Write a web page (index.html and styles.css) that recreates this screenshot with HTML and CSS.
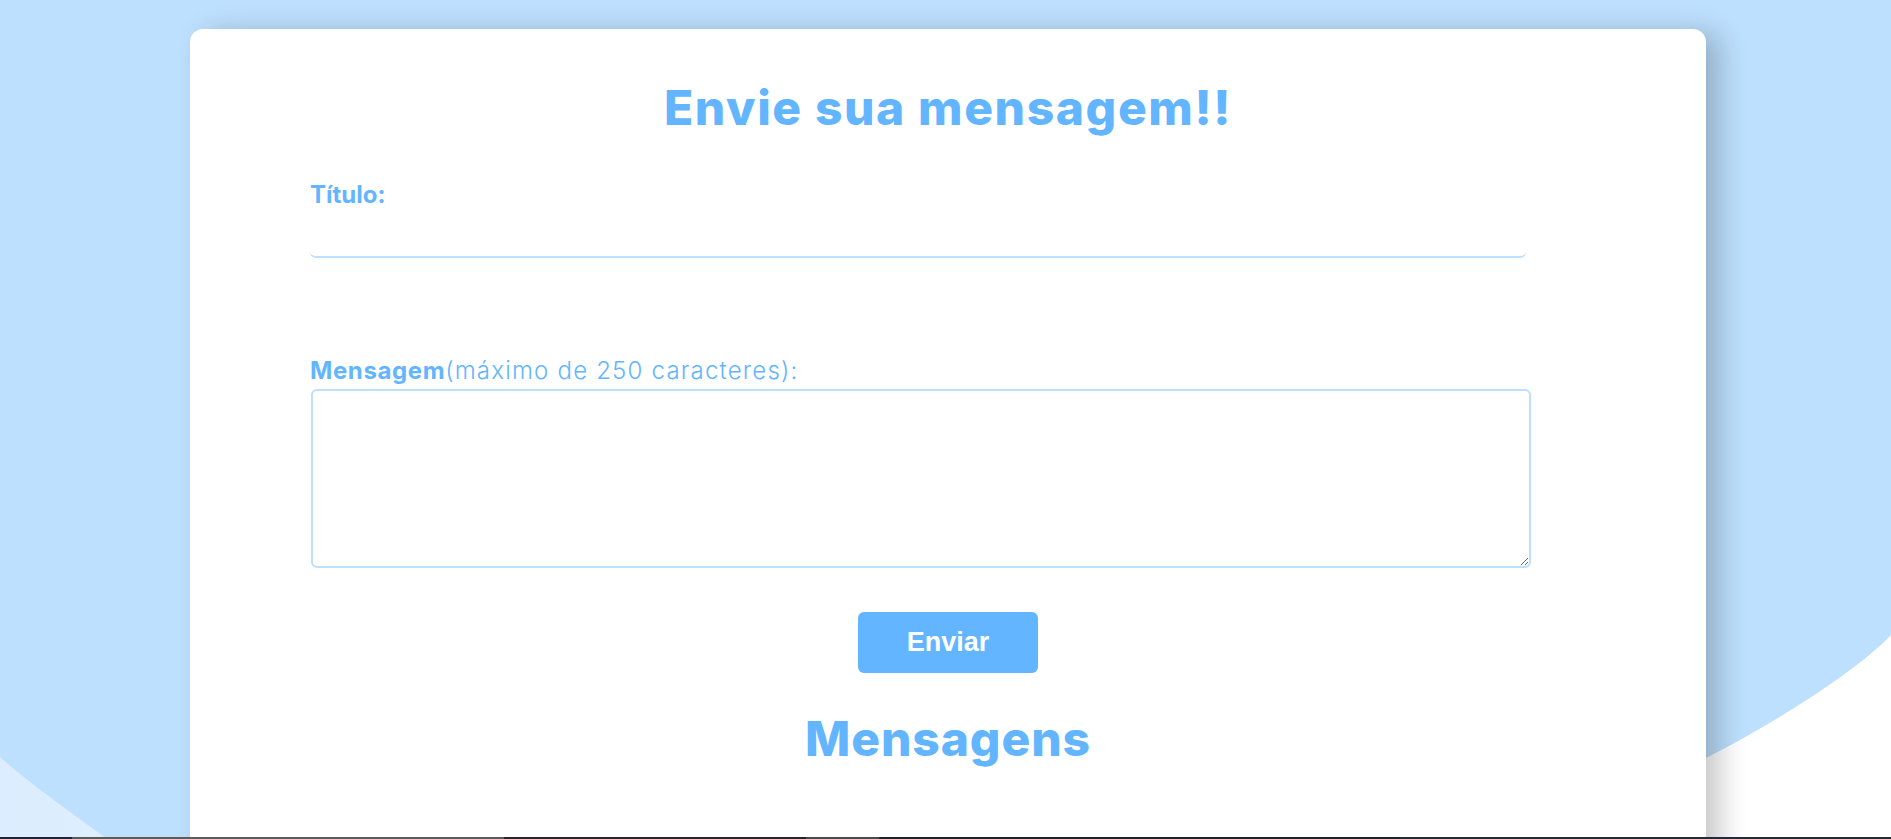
FILE: index.html
```html
<!DOCTYPE html>
<html lang="pt-BR">
<head>
<meta charset="utf-8">
<title>Envie sua mensagem</title>
<link rel="stylesheet" href="styles.css">
</head>
<body>
  <div class="page">
    <main class="card">
      <h1 class="title">Envie sua mensagem!!</h1>
      <form class="form">
        <div class="field">
          <label class="label" for="titulo"><strong class="strong">Título:</strong></label>
          <input id="titulo" class="input" type="text">
        </div>
        <div class="field field-msg">
          <label class="label" for="msg"><strong class="strong strong-wide">Mensagem</strong><span class="hint">(máximo de 250 caracteres):</span></label>
          <textarea id="msg" class="textarea" maxlength="250"></textarea>
        </div>
        <div class="actions">
          <button class="btn" type="button">Enviar</button>
        </div>
      </form>
      <h2 class="subtitle">Mensagens</h2>
    </main>
  </div>
  <div class="taskbar"></div>
</body>
</html>
```
FILE: styles.css
```css
html, body {
  margin: 0;
  height: 100%;
}

body {
  display: flex;
  flex-direction: column;
  overflow: hidden;
  font-family: "Inter", "Liberation Sans", sans-serif;
  color: #62b5fe;
  background:
    url("data:image/svg+xml,%3Csvg xmlns='http://www.w3.org/2000/svg' viewBox='0 0 1891 839' preserveAspectRatio='none'%3E%3Cpath fill='%23bde0fe' d='M0 0 H1891 V635 C1851 677 1756 733 1706 758 L1500 900 L300 900 L107 839 C75 815 35 788 0 757 Z'/%3E%3C/svg%3E") 0 0 / 100% 100% no-repeat,
    linear-gradient(90deg, #dbedfe 0%, #ffffff 75%);
}

.page {
  flex: 1;
  overflow: hidden;
  padding-top: 29px;
}

.card {
  width: 1516px;
  min-height: 900px;
  margin: 0 0 0 190px;
  box-sizing: border-box;
  padding-top: 50px;
  background: #ffffff;
  border-radius: 13px;
  box-shadow: 14px 4px 28px rgba(0, 0, 0, 0.22);
}

.title,
.subtitle {
  margin: 0;
  text-align: center;
  font-size: 48px;
  line-height: 58px;
  font-weight: 800;
  color: #62b5fe;
}

.title {
  letter-spacing: 1.6px;
}

.form {
  padding-top: 43px;
}

.field {
  width: 1221px;
  margin-left: 120px;
}

.label {
  display: block;
  font-size: 24px;
  line-height: 30px;
  color: #62b5fe;
}

.strong {
  font-weight: 700;
}

.strong-wide {
  letter-spacing: 0.6px;
}

.hint {
  font-weight: 300;
  letter-spacing: 1.2px;
}

.input {
  display: block;
  width: 1216px;
  height: 44px;
  margin-top: 4px;
  box-sizing: border-box;
  border: none;
  border-bottom: 2px solid #bde0fe;
  border-radius: 6px;
  background: transparent;
  outline: none;
  font: 20px "Inter", sans-serif;
}

.field-msg {
  margin-top: 98px;
}

.textarea {
  display: block;
  width: 1220px;
  height: 179px;
  margin: 3px 0 0 1px;
  box-sizing: border-box;
  border: 2px solid #bde0fe;
  border-radius: 6px;
  outline: none;
  font: 18px "Inter", sans-serif;
}

.actions {
  display: flex;
  justify-content: center;
  margin-top: 44px;
}

.btn {
  width: 180px;
  height: 61px;
  border: none;
  border-radius: 6px;
  background: #62b5fe;
  color: #ffffff;
  font: 700 27px "Liberation Sans", Arial, sans-serif;
}

.subtitle {
  margin-top: 37px;
  letter-spacing: 0.9px;
}

.taskbar {
  height: 2px;
  flex: none;
  background: linear-gradient(90deg,
    #1e2433 0, #1e2433 72px,
    #5b5b5b 72px, #5b5b5b 504px,
    #2c2228 504px, #2c2228 806px,
    #4a4a4a 806px, #4a4a4a 879px,
    #222328 879px, #222328 1400px,
    #242b35 1400px);
}
```
